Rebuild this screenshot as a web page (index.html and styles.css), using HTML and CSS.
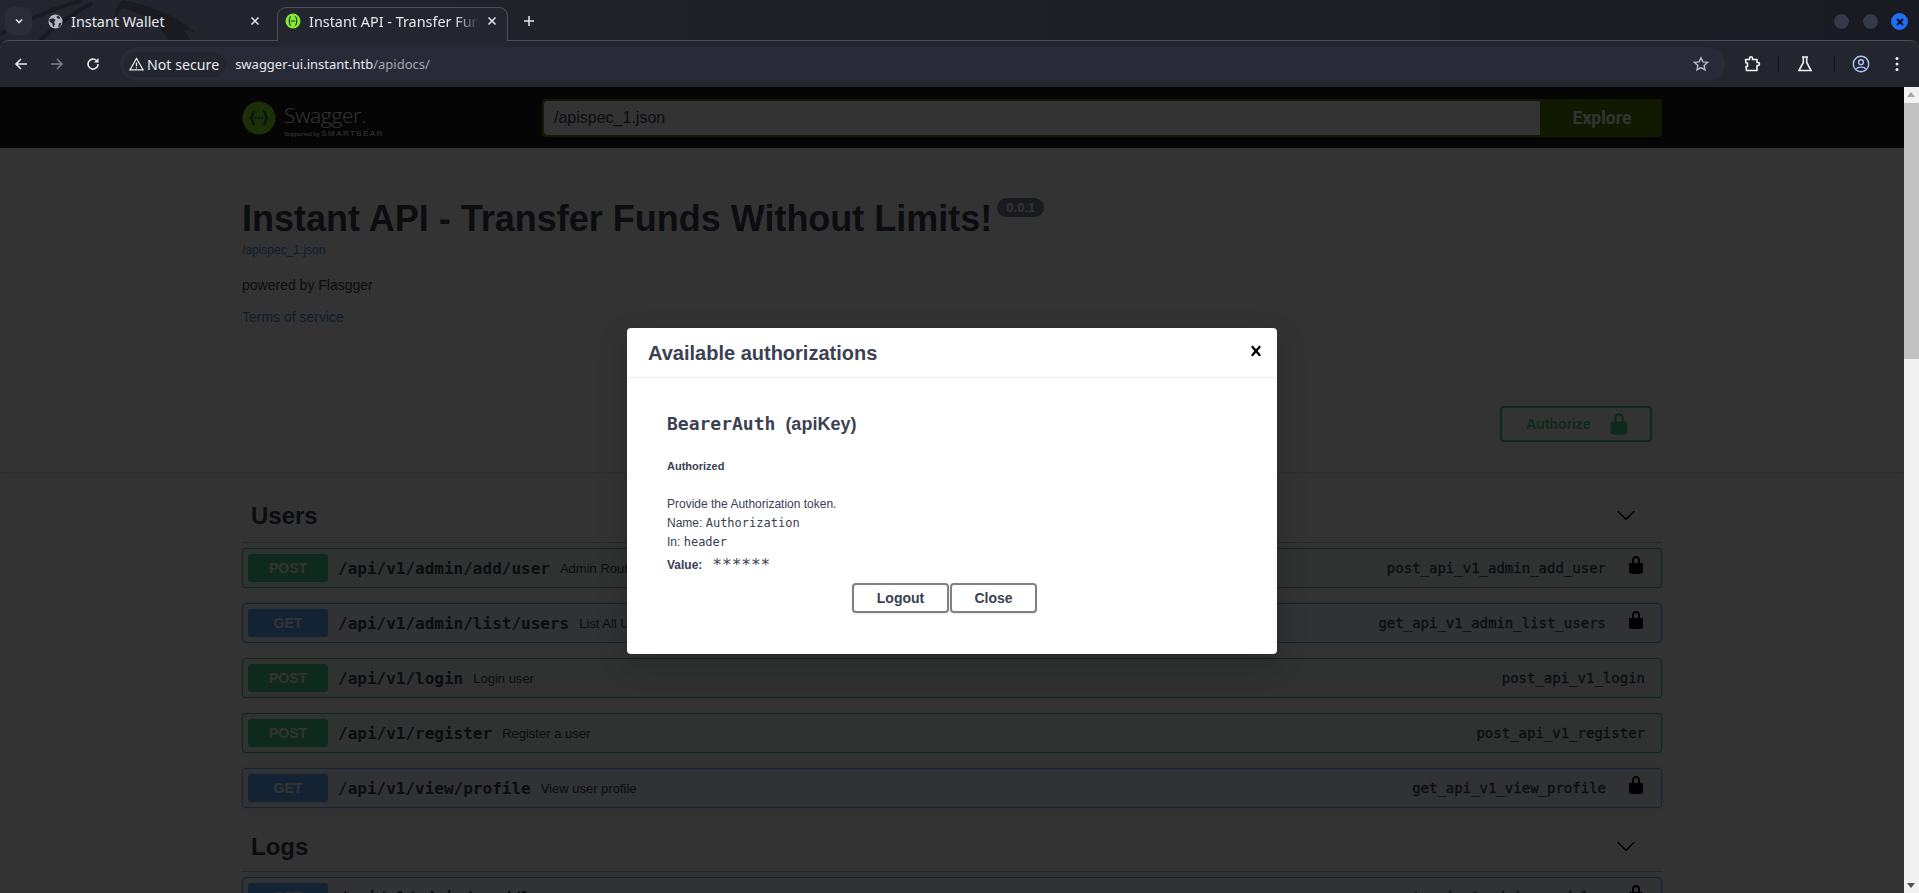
FILE: index.html
```html
<!DOCTYPE html>
<html lang="en">
<head>
<meta charset="utf-8">
<title>Instant API - Transfer Funds Without Limits!</title>
<link rel="stylesheet" href="styles.css">
</head>
<body>
<svg class="defs" width="0" height="0" aria-hidden="true">
  <symbol id="lock" viewBox="0 0 20 20"><path d="M15.8 8H14V5.6C14 2.703 12.665 1 10 1 7.334 1 6 2.703 6 5.6V8H4c-.553 0-1 .646-1 1.199V17c0 .549.428 1.139.951 1.307l1.197.387C5.672 18.861 6.55 19 7.1 19h5.8c.549 0 1.428-.139 1.951-.307l1.196-.387c.524-.167.953-.757.953-1.306V9.199C17 8.646 16.352 8 15.8 8zM12 8H8V5.199C8 3.754 8.797 3 10 3c1.203 0 2 .754 2 2.199V8z"/></symbol>
  <symbol id="chev" viewBox="0 0 20 20"><path d="M17.418 6.109c.272-.268.709-.268.979 0s.271.701 0 .969l-7.908 7.83c-.27.268-.707.268-.979 0l-7.908-7.83c-.27-.268-.27-.701 0-.969.271-.268.709-.268.979 0L10 13.25l7.418-7.141z"/></symbol>
</svg>

<header class="tabstrip">
  <svg class="dragon" viewBox="0 0 300 40" width="300" height="40" aria-hidden="true"><path d="M0 34C30 18 55 8 82 0M40 40C60 22 75 12 92 3" fill="none" stroke="#191b21" stroke-width="4"/><path d="M122 0c26 5 54 15 74 33l-12-4 6 11h-22c-4-9-16-24-46-32-4 5-6 9-7 14-2-8 2-16 7-22z" fill="#191b21"/></svg>
  <button class="tabmenu"><svg width="10" height="10" viewBox="0 0 10 10"><path d="M2 3.500 5 6.500 8 3.500" fill="none" stroke="#e6e8ee" stroke-width="1.600"/></svg></button>
  <div class="tab">
    <svg class="fav" viewBox="0 0 16 16"><circle cx="8" cy="8" r="7.500" fill="#b5b8c0"/><path d="M1.500 5.500 6 4.500 8 6.500 6.500 8.500l1 2.500-2 3-1-4-3-2zM10 1.500l3 2-1 2-3-2zM11.500 10l3-1-1.500 4-2 1z" fill="#23262f"/></svg>
    <span class="tabtitle">Instant Wallet</span>
    <svg class="tabx" viewBox="0 0 10 10"><path d="M1.500 1.500 8.500 8.500M8.500 1.500 1.500 8.500" stroke="#e6e8ee" stroke-width="1.500"/></svg>
  </div>
  <div class="tab active">
    <svg class="fav" viewBox="0 0 16 16"><circle cx="8" cy="8" r="7.500" fill="#85ea2d"/><path d="M6 3.500c-2 0-1 3-2 4.500 1 1.500 0 4.500 2 4.500M10 3.500c2 0 1 3 2 4.500-1 1.500 0 4.500-2 4.500M5.800 8h4.400" fill="none" stroke="#173647" stroke-width="1.100"/></svg>
    <span class="tabtitle fade">Instant API - Transfer Funds Without Limits!</span>
    <svg class="tabx" viewBox="0 0 10 10"><path d="M1.500 1.500 8.500 8.500M8.500 1.500 1.500 8.500" stroke="#e6e8ee" stroke-width="1.500"/></svg>
  </div>
  <svg class="newtab" viewBox="0 0 12 12"><path d="M6 1v10M1 6h10" stroke="#e6e8ee" stroke-width="1.500"/></svg>
  <div class="winbtns">
    <span class="winbtn"></span>
    <span class="winbtn"></span>
    <span class="winbtn close"><svg viewBox="0 0 10 10" width="10" height="10"><path d="M2 2 8 8M8 2 2 8" stroke="#06122b" stroke-width="2"/></svg></span>
  </div>
</header>

<nav class="toolbar">
  <svg class="tool" viewBox="0 0 16 16"><path d="M14 8H3M8 3 3 8l5 5" fill="none" stroke="#e6e8ee" stroke-width="1.600"/></svg>
  <svg class="tool" viewBox="0 0 16 16"><path d="M2 8h11M8 3l5 5-5 5" fill="none" stroke="#7c7f88" stroke-width="1.600"/></svg>
  <svg class="tool" viewBox="0 0 16 16"><path d="M13 8a5 5 0 1 1-1.500-3.500L13 6" fill="none" stroke="#e6e8ee" stroke-width="1.600"/><path d="M13.500 2v4.500H9z" fill="#e6e8ee"/></svg>
  <div class="omnibox">
    <div class="chip">
      <svg width="15" height="14" viewBox="0 0 15 14"><path d="M7.500 1.500 14 12.800H1zM7.500 5.500v3.800M7.500 10.200v1.200" fill="none" stroke="#e6e8ee" stroke-width="1.300"/></svg>
      <span>Not secure</span>
    </div>
    <div class="url">swagger-ui.instant.htb<span class="urlpath">/apidocs/</span></div>
    <svg class="star" viewBox="0 0 16 16"><path d="m8 1.800 1.900 4.100 4.500.5-3.300 3 .9 4.400L8 11.600l-4 2.200.9-4.400-3.300-3 4.500-.5z" fill="none" stroke="#b9bbc2" stroke-width="1.400"/></svg>
  </div>
  <svg class="ext" viewBox="0 0 18 18"><path d="M2.500 4.500H6.500V3.200a1.500 1.500 0 0 1 3 0V4.500H14V7.500H15a1.500 1.500 0 0 1 0 3H14V15.500H3.500L3 11.500H4.500V8H3z" fill="none" stroke="#f0f1f4" stroke-width="1.600" stroke-linejoin="round"/></svg>
  <span class="sep"></span>
  <svg class="lab" viewBox="0 0 18 18"><path d="M6 2h6M7.300 2v5.500L3 15.500h12l-4.300-8V2" fill="none" stroke="#f0f1f4" stroke-width="1.600"/></svg>
  <span class="sep"></span>
  <svg class="prof" viewBox="0 0 18 18"><circle cx="9" cy="9" r="7.700" fill="none" stroke="#a8c7fa" stroke-width="1.400"/><circle cx="9" cy="7.200" r="2.400" fill="none" stroke="#a8c7fa" stroke-width="1.400"/><path d="M4.500 14c1-2.500 8-2.500 9 0" fill="none" stroke="#a8c7fa" stroke-width="1.400"/></svg>
  <svg class="menu" viewBox="0 0 4 16"><circle cx="2" cy="2.500" r="1.500" fill="#f0f1f4"/><circle cx="2" cy="8" r="1.500" fill="#f0f1f4"/><circle cx="2" cy="13.500" r="1.500" fill="#f0f1f4"/></svg>
</nav>

<div class="viewport">
  <main class="page">
    <div class="topbar">
      <div class="wrap topbar-in">
        <div class="logo">
          <svg class="logomark" viewBox="0 0 36 36"><circle cx="18" cy="18" r="17.500" fill="#85ea2d"/><path d="M13.500 11c-3 0-1.500 5.500-4 7 2.500 1.500 1 7 4 7M22.500 11c3 0 1.500 5.500 4 7-2.500 1.500-1 7-4 7" fill="none" stroke="#173647" stroke-width="1.700"/><circle cx="14.500" cy="18" r="1" fill="#173647"/><circle cx="18" cy="18" r="1" fill="#173647"/><circle cx="21.500" cy="18" r="1" fill="#173647"/></svg>
          <div class="logotext">
            <span class="logoname">Swagger.</span>
            <span class="logosub">Supported by <span class="bear">SMARTBEAR</span></span>
          </div>
        </div>
        <form class="explore">
          <input class="spec" type="text" value="/apispec_1.json">
          <span class="explorebtn">Explore</span>
        </form>
      </div>
    </div>

    <section class="wrap info">
      <h2 class="title">Instant API - Transfer Funds Without Limits!<span class="version">0.0.1</span></h2>
      <a class="speclink">/apispec_1.json</a>
      <p class="desc">powered by Flasgger</p>
      <a class="terms">Terms of service</a>
    </section>

    <section class="scheme">
      <div class="wrap scheme-in">
        <button class="authorize">Authorize<svg class="authlock"><use href="#lock"/></svg></button>
      </div>
    </section>

    <section class="wrap ops">
      <div class="tag">
        <h3>Users</h3>
        <svg class="chev"><use href="#chev"/></svg>
      </div>
      <div class="op post"><span class="method">POST</span><span class="path">/api/v1/admin/add/user</span><span class="sum">Admin Route</span><span class="opid">post_api_v1_admin_add_user</span><svg class="oplock"><use href="#lock"/></svg></div>
      <div class="op get"><span class="method">GET</span><span class="path">/api/v1/admin/list/users</span><span class="sum">List All Users</span><span class="opid">get_api_v1_admin_list_users</span><svg class="oplock"><use href="#lock"/></svg></div>
      <div class="op post"><span class="method">POST</span><span class="path">/api/v1/login</span><span class="sum">Login user</span><span class="opid last">post_api_v1_login</span></div>
      <div class="op post"><span class="method">POST</span><span class="path">/api/v1/register</span><span class="sum">Register a user</span><span class="opid last">post_api_v1_register</span></div>
      <div class="op get"><span class="method">GET</span><span class="path">/api/v1/view/profile</span><span class="sum">View user profile</span><span class="opid">get_api_v1_view_profile</span><svg class="oplock"><use href="#lock"/></svg></div>
      <div class="tag logs">
        <h3>Logs</h3>
        <svg class="chev"><use href="#chev"/></svg>
      </div>
      <div class="op get"><span class="method">GET</span><span class="path">/api/v1/admin/read/log</span><span class="sum">Read a log</span><span class="opid">get_api_v1_admin_read_log</span><svg class="oplock"><use href="#lock"/></svg></div>
    </section>

    <div class="backdrop">
      <div class="modal">
        <div class="modal-head">
          <h3>Available authorizations</h3>
          <svg class="closex" viewBox="0 0 20 20"><path d="M14.348 14.849c-.469.469-1.229.469-1.697 0L10 11.819l-2.651 3.029c-.469.469-1.229.469-1.697 0-.469-.469-.469-1.229 0-1.697l2.758-3.150-2.759-3.152c-.469-.469-.469-1.228 0-1.697s1.228-.469 1.697 0L10 8.183l2.651-3.031c.469-.469 1.228-.469 1.697 0s.469 1.229 0 1.697l-2.758 3.152 2.758 3.150c.469.469.469 1.229 0 1.698z"/></svg>
        </div>
        <div class="modal-body">
          <h4 class="authname"><code>BearerAuth</code>&nbsp; (apiKey)</h4>
          <h6 class="authed">Authorized</h6>
          <p class="line">Provide the Authorization token.</p>
          <p class="line">Name: <code>Authorization</code></p>
          <p class="line">In: <code>header</code></p>
          <p class="line value"><b>Value:</b><code class="stars">******</code></p>
          <div class="actions">
            <button class="mbtn logout">Logout</button>
            <button class="mbtn closeb">Close</button>
          </div>
        </div>
      </div>
    </div>
  </main>
  <aside class="scrollbar">
    <span class="arrow up"></span>
    <span class="thumb"></span>
    <span class="track"></span>
    <span class="arrow down"></span>
  </aside>
</div>
</body>
</html>
```
FILE: styles.css
```css
* { box-sizing: border-box; }
html, body { margin: 0; height: 100%; overflow: hidden; }
body { display: flex; flex-direction: column; font-family: "Liberation Sans", Arial, sans-serif; background: #1e2028; }
.defs { position: absolute; }

/* browser tab strip */
.tabstrip { position: relative; z-index: 2; height: 40px; flex: none; display: flex; align-items: flex-start; background: linear-gradient(90deg, #23262e 0, #1f2129 40%, #191b22 100%); font-family: "Noto Sans", sans-serif; color: #e6e8ee; }
.dragon { position: absolute; left: 0; top: 0; }
.tabmenu { position: relative; width: 27px; height: 28px; margin: 7px 0 0 5px; padding: 0; border: 0; border-radius: 8px; background: #2a2d37; display: flex; align-items: center; justify-content: center; }
.tab { position: relative; width: 245px; height: 34px; margin-top: 7px; display: flex; align-items: center; padding: 0 17px 6px 16px; font-size: 14.4px; }
.tab.active { width: 231px; background: #23262f; border: 1px solid #4c4f58; border-bottom: 0; border-radius: 9px 9px 0 0; padding: 0 10px 7px 7px; }
.fav { width: 15px; height: 15px; flex: none; margin-right: 8px; }
.active .fav { width: 16px; height: 16px; margin-right: 8px; }
.tabtitle { flex: 1; white-space: nowrap; overflow: hidden; }
.tabtitle.fade { -webkit-mask-image: linear-gradient(90deg, #000 86%, transparent 100%); mask-image: linear-gradient(90deg, #000 86%, transparent 100%); }
.tabx { width: 10px; height: 10px; flex: none; margin-left: 8px; }
.newtab { position: relative; width: 12px; height: 12px; margin: 15px 0 0 15px; }
.winbtns { position: relative; margin-left: auto; margin-top: 13px; margin-right: 11px; display: flex; gap: 12px; }
.winbtn { width: 17px; height: 17px; border-radius: 50%; background: #353a4a; border: 1px solid #14161b; display: flex; align-items: center; justify-content: center; }
.winbtn.close { background: #1f6ff2; border-color: #1f6ff2; }

/* browser toolbar */
.toolbar { height: 47px; flex: none; display: flex; align-items: center; background: #23262f; border-top: 1px solid #4c4f58; border-radius: 9px 9px 0 0; padding-left: 13px; font-family: "Noto Sans", sans-serif; color: #e6e8ee; }
.tool { width: 16px; height: 16px; flex: none; margin-right: 20px; }
.tool:nth-of-type(3) { margin-right: 19px; }
.omnibox { width: 1605px; height: 34px; flex: none; background: #282b37; border-radius: 17px; display: flex; align-items: center; font-size: 14.2px; padding-left: 4px; }
.chip { display: flex; align-items: center; gap: 3px; height: 25px; padding: 0 7px 0 5px; background: #23262f; border-radius: 13px; white-space: nowrap; }
.url { margin-left: 9px; white-space: nowrap; flex: 1; font-size: 13px; }
.urlpath { color: #a4a6ad; }
.star { width: 16px; height: 16px; margin-right: 16px; }
.ext { width: 18px; height: 18px; flex: none; margin: 0 17px 0 18px; }
.sep { width: 1px; height: 18px; background: #14161b; flex: none; }
.lab { width: 18px; height: 18px; flex: none; margin: 0 20px 0 17px; }
.prof { width: 18px; height: 18px; flex: none; margin: 0 25px 0 17px; }
.menu { width: 4px; height: 16px; flex: none; }

/* viewport */
.viewport { flex: 1; min-height: 0; display: flex; }
.page { position: relative; flex: 1; min-width: 0; overflow: hidden; background: #fff; color: #3b4151; }
.wrap { width: 1460px; margin: 0 auto; padding: 0 20px; }

/* scrollbar */
.scrollbar { width: 15px; flex: none; display: flex; flex-direction: column; background: #f1f1f1; }
.arrow { height: 16px; flex: none; position: relative; }
.arrow::after { content: ""; position: absolute; left: 3px; border-left: 4px solid transparent; border-right: 4px solid transparent; }
.arrow.up::after { top: 5px; border-bottom: 5px solid #a3a3a3; }
.arrow.down::after { top: 6px; border-top: 5px solid #505050; }
.thumb { height: 256px; flex: none; background: #c1c1c1; }
.track { flex: 1; }

/* swagger top bar */
.topbar { height: 61px; background: #1b1b1b; }
.topbar-in { display: flex; align-items: center; height: 100%; }
.logo { width: 300px; display: flex; align-items: center; gap: 8px; flex: none; }
.logomark { width: 34px; height: 34px; flex: none; }
.logotext { display: flex; flex-direction: column; color: #fff; margin-top: 4px; }
.logoname { font-family: "Open Sans", sans-serif; font-size: 21px; font-weight: 300; line-height: 26px; letter-spacing: -.3px; }
.logosub { font-size: 6px; line-height: 8px; margin-top: 2px; white-space: nowrap; }
.bear { font-size: 8px; letter-spacing: 1.400px; }
.explore { flex: 1; height: 38px; margin: 0; display: flex; border: 2px solid #547f00; border-radius: 4px; background: #547f00; }
.spec { flex: 1; min-width: 0; height: 34px; border: 0; border-radius: 4px 0 0 4px; padding: 0 10px; font: 400 16px "Liberation Sans", sans-serif; color: #3b4151; background: #fff; outline: 0; }
.explorebtn { width: 120px; display: flex; align-items: center; justify-content: center; padding-left: 4px; color: #fff; font-family: "Roboto", sans-serif; font-size: 17.500px; font-weight: 700; }

/* info block */
.info { height: 239px; padding-top: 48px; }
.title { margin: 0; font-size: 36px; line-height: 45px; font-weight: 700; white-space: nowrap; }
.version { display: inline-block; vertical-align: top; margin: 2px 0 0 5px; padding: 0 9px; border-radius: 57px; background: #7d8492; color: #fff; font-size: 13px; line-height: 19px; font-weight: 700; }
.speclink { display: block; margin-top: 2px; color: #4990e2; font-size: 12px; line-height: 15px; }
.desc { margin: 18px 0 0; font-size: 14px; line-height: 18px; }
.terms { display: block; margin-top: 14px; color: #4990e2; font-size: 14px; line-height: 18px; }

/* authorize row */
.scheme { height: 85px; padding-top: 19px; box-shadow: 0 1px 2px 0 rgba(0,0,0,.15); background: #fff; }
.scheme-in { display: flex; justify-content: flex-end; padding-right: 30px; }
.authorize { width: 152px; height: 36px; display: flex; align-items: center; padding: 0 0 0 24px; background: transparent; border: 2px solid #49cc90; border-radius: 4px; color: #49cc90; font: 700 14px "Liberation Sans", sans-serif; }
.authlock { width: 24px; height: 24px; margin-left: 16px; fill: #49cc90; }

/* operations */
.tag { height: 71px; display: flex; align-items: center; justify-content: space-between; border-bottom: 1px solid rgba(59,65,81,.3); padding: 18px 26px 0 9px; margin-bottom: 5px; }
.tag h3 { margin: 0; font-size: 24px; font-weight: 700; line-height: 30px; }
.tag.logs { height: 49px; padding-top: 0; }
.chev { width: 20px; height: 20px; margin-top: -2px; }
.op { height: 40px; margin-bottom: 15px; display: flex; align-items: center; padding: 0 5px; border: 1px solid; border-radius: 4px; box-shadow: 0 0 3px rgba(0,0,0,.19); }
.op.post { background: rgba(73,204,144,.1); border-color: #49cc90; }
.op.get { background: rgba(97,175,254,.1); border-color: #61affe; }
.method { width: 80px; height: 28px; flex: none; display: flex; align-items: center; justify-content: center; border-radius: 3px; color: #fff; font-size: 14px; font-weight: 700; }
.post .method { background: #49cc90; }
.get .method { background: #61affe; }
.path { margin-left: 10px; font-family: "DejaVu Sans Mono", monospace; font-size: 16px; font-weight: 700; white-space: nowrap; }
.sum { margin-left: 10px; font-size: 13px; flex: 1; white-space: nowrap; }
.opid { font-family: "DejaVu Sans Mono", monospace; font-size: 14px; white-space: nowrap; -webkit-text-stroke: .3px #3b4151; }
.opid.last { margin-right: 11px; }
.oplock { width: 20px; height: 20px; margin: -6px 10px 0 20px; fill: #000; }

/* modal */
.backdrop { position: absolute; inset: 0; background: rgba(0,0,0,.8); display: flex; justify-content: center; align-items: flex-start; padding-top: 241px; }
.modal { width: 650px; height: 326px; background: #fff; border-radius: 4px; box-shadow: 0 10px 30px 0 rgba(0,0,0,.2); }
.modal-head { height: 50px; display: flex; align-items: center; justify-content: space-between; padding: 2px 11px 0 21px; border-bottom: 1px solid #ebebeb; }
.modal-head h3 { margin: 0; font-size: 20px; font-weight: 700; }
.closex { width: 20px; height: 20px; margin-top: -6px; fill: #000; }
.modal-body { padding: 36px 40px 0; }
code { font-family: "DejaVu Sans Mono", monospace; }
.authname { margin: 0; font-size: 18px; line-height: 20px; font-weight: 700; }
.authed { margin: 25px 0 0; font-size: 11px; line-height: 14px; font-weight: 700; }
.line { margin: 0; font-size: 12px; line-height: 19px; }
.authed + .line { margin-top: 22px; }
.line code { font-size: 12px; }
.line.value { display: flex; align-items: center; margin-top: 4px; }
.line .stars { font-size: 16px; margin-left: 10px; position: relative; top: -1px; }
.actions { display: flex; justify-content: center; margin-top: 8px; gap: 1px; padding-right: 15px; }
.mbtn { height: 30px; padding: 0; border: 2px solid gray; border-radius: 4px; background: transparent; color: #3b4151; font: 700 14px "Liberation Sans", sans-serif; box-shadow: 0 1px 2px rgba(0,0,0,.1); }
.logout { width: 97px; }
.closeb { width: 87px; }
```
